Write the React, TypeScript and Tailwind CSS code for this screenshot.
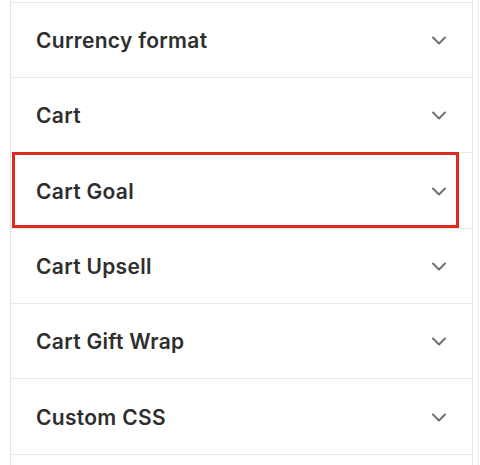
const rows = [
  { label: "Currency format", h: "h-[75px]" },
  { label: "Cart", h: "h-[75px]" },
  { label: "Cart Goal", h: "h-[76px]" },
  { label: "Cart Upsell", h: "h-[75px]" },
  { label: "Cart Gift Wrap", h: "h-[75px]" },
  { label: "Custom CSS", h: "h-[76px]" },
  { label: "", h: "h-[20px]" },
];

function Chevron() {
  return (
    <svg width="20" height="20" viewBox="0 0 20 20" fill="none" className="shrink-0">
      <path d="M4 7.5l6 6 6-6" stroke="#6f6f6f" strokeWidth="2" strokeLinecap="round" strokeLinejoin="round" />
    </svg>
  );
}

export default function App() {
  return (
    <div
      className="relative flex h-[465px] w-[480px] overflow-hidden bg-white"
      style={{ fontFamily: "Inter, 'Noto Sans', sans-serif" }}
    >
      <div className="ml-[10px] flex w-[463px] flex-col border-x border-[#e4e4e4]">
        <div className="h-[2px] shrink-0" />
        {rows.map((row, i) => (
          <div
            key={i}
            className={`${row.h} flex shrink-0 items-center justify-between border-t border-[#e8e8e8] pl-[25px] pr-[23px]`}
          >
            {row.label && (
              <>
                <span className="pt-[2px] text-[21px] font-semibold tracking-[0.3px] text-[#2e2e2e]">{row.label}</span>
                <Chevron />
              </>
            )}
          </div>
        ))}
      </div>
      <div className="ml-[5px] w-px bg-[#ececec]" />

      {/* highlight around Cart Goal */}
      <div className="absolute left-[12px] top-[152px] h-[76px] w-[447px] border-[3px] border-[#e0291d]" />
    </div>
  );
}
